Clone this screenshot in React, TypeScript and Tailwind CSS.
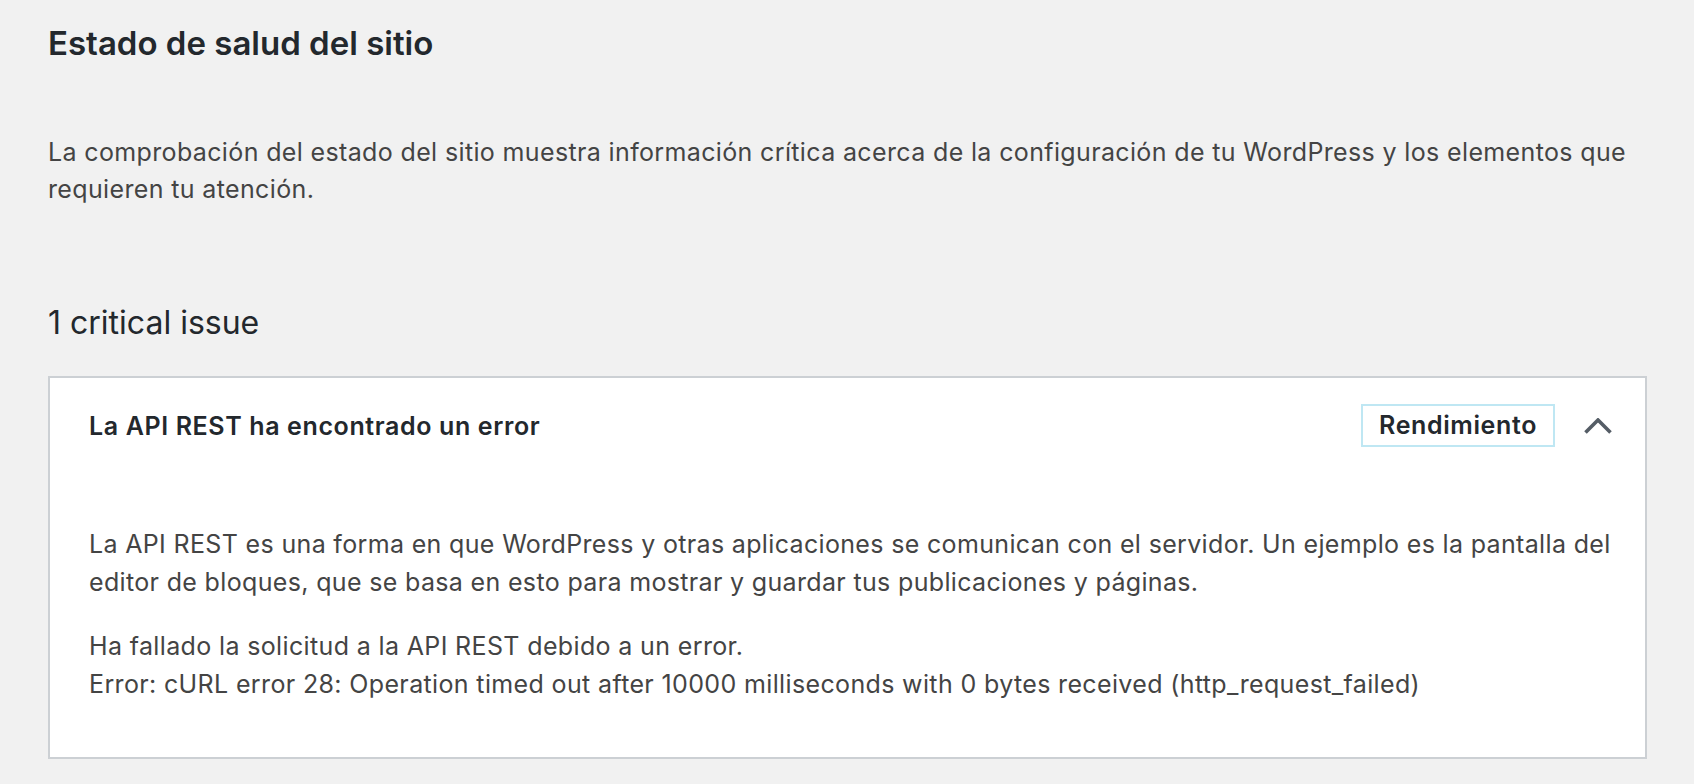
import React from "react";

export default function App() {
  return (
    <div
      className="min-h-[784px] w-full bg-[#f1f1f1] pl-[48px] pr-[47px] pt-[23px] pb-[28px] text-[#444]"
      style={{ fontFamily: "Inter, 'Noto Sans', sans-serif" }}
    >
      <h1 className="text-[33px] leading-[40px] font-semibold text-[#23282d]">
        Estado de salud del sitio
      </h1>
      <p className="mt-[71px] text-[25px] leading-[37px] tracking-[0.36px] text-[#444]">
        La comprobación del estado del sitio muestra información crítica acerca de la configuración de tu WordPress y los elementos que requieren tu atención.
      </p>
      <h2 className="mt-[95px] text-[32px] leading-[40px] font-normal text-[#23282d]">
        1 critical issue
      </h2>
      <div className="mt-[33px] border-2 border-[#ccd0d4] bg-white">
        <div className="flex items-center pl-[39px] pr-[33px] pt-[26px] pb-[24px]">
          <h3 className="flex-1 text-[25px] leading-[30px] font-semibold tracking-[0.62px] text-[#23282d]">
            La API REST ha encontrado un error
          </h3>
          <span className="flex h-[43px] w-[194px] items-center justify-center border-2 border-[#bfe7f3] text-[25px] font-semibold tracking-[0.62px] text-[#23282d]">
            Rendimiento
          </span>
          <svg
            className="ml-[29px]"
            width="28"
            height="16"
            viewBox="0 0 28 16"
            fill="none"
          >
            <polyline
              points="1.5,14.5 14,2 26.5,14.5"
              stroke="#555d66"
              strokeWidth="3.6"
              strokeLinejoin="miter"
            />
          </svg>
        </div>
        <div className="pl-[39px] pr-[16px] pt-[54px] pb-[54px]">
          <p className="text-[25px] leading-[38px] tracking-[0.34px] text-[#444]">
            La API REST es una forma en que WordPress y otras aplicaciones se comunican con el servidor. Un ejemplo es la pantalla del editor de bloques, que se basa en esto para mostrar y guardar tus publicaciones y páginas.
          </p>
          <p className="mt-[26px] text-[25px] leading-[38px] tracking-[0.36px] text-[#444]">
            Ha fallado la solicitud a la API REST debido a un error.
            <br />
            Error: cURL error 28: Operation timed out after 10000 milliseconds with 0 bytes received (http_request_failed)
          </p>
        </div>
      </div>
    </div>
  );
}
